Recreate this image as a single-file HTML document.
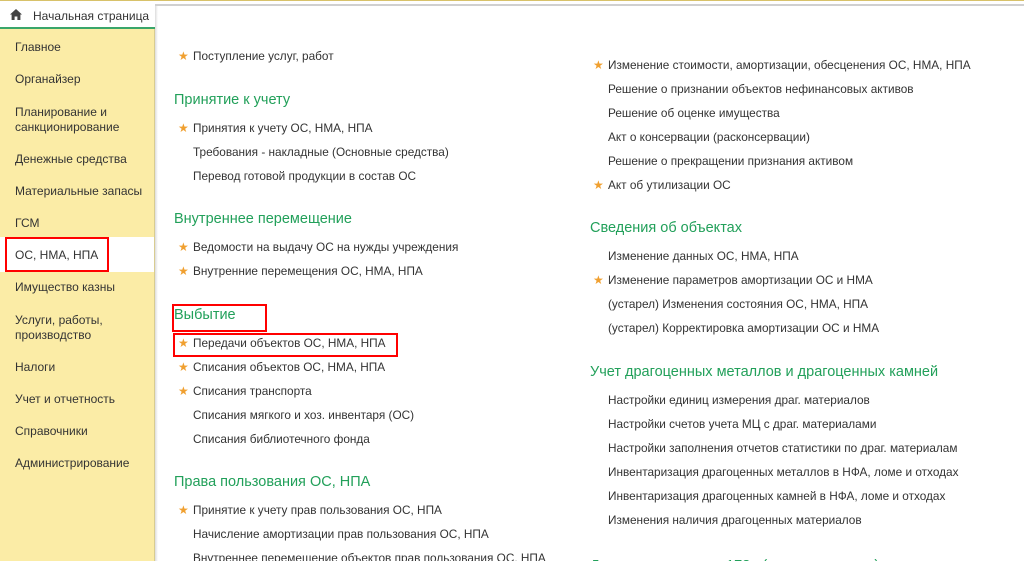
<!DOCTYPE html>
<html style="width:1024px;height:561px;overflow:hidden"><head><meta charset="utf-8"><style>
*{margin:0;padding:0;box-sizing:border-box}
body{width:1024px;height:561px;overflow:hidden;background:#fff;font-family:"Liberation Sans",Arial,sans-serif;position:relative;color:#333}
.top{position:absolute;left:0;top:0;width:1024px;height:1px;background:#d8c26a}
.gl{position:absolute;left:155px;top:4px;width:869px;height:2px;background:#d0d0d0}
.tab{position:absolute;left:0;top:1px;width:155px;height:28px;background:#fff;border-bottom:2px solid #3aa66a}
.tab span{position:absolute;left:33px;top:8px;font-size:12px;color:#333}
.side{position:absolute;left:0;top:29px;width:155px;height:532px;background:#fbeca6;border-right:1px solid #d8cc90}
.si{position:absolute;left:15px;font-size:12px;color:#333;line-height:15px}
.sel{position:absolute;left:0;top:237px;width:154px;height:35px;background:#fff}
.r{position:absolute;font-size:11.8px;line-height:14px;white-space:nowrap;color:#333}
.h{position:absolute;font-size:14.5px;line-height:16px;color:#22a05a;white-space:nowrap}
.st{color:#f0a030;position:absolute;margin-left:-15px;font-size:12px}
.box{position:absolute;border:2px solid #f00}
.main{position:absolute;left:155px;top:6px;width:3px;height:555px;background:linear-gradient(90deg,#ddd,#fff)}
</style></head><body>
<div class="top"></div>
<div class="gl"></div>
<div class="side"></div>
<div class="sel"></div>
<div class="tab"><svg style="position:absolute;left:10px;top:8px" width="12" height="11" viewBox="0 0 12 11"><path d="M6 0L0 5.5h1.6V11h3V7.5h2.8V11h3V5.5H12z" fill="#444"/></svg><span>Начальная страница</span></div>
<div class="main"></div>
<div class="si" style="top:40px">Главное</div>
<div class="si" style="top:72px">Органайзер</div>
<div class="si" style="top:105px">Планирование и<br>санкционирование</div>
<div class="si" style="top:152px">Денежные средства</div>
<div class="si" style="top:184px">Материальные запасы</div>
<div class="si" style="top:216px">ГСМ</div>
<div class="si" style="top:248px">ОС, НМА, НПА</div>
<div class="si" style="top:280px">Имущество казны</div>
<div class="si" style="top:313px">Услуги, работы,<br>производство</div>
<div class="si" style="top:360px">Налоги</div>
<div class="si" style="top:392px">Учет и отчетность</div>
<div class="si" style="top:424px">Справочники</div>
<div class="si" style="top:456px">Администрирование</div>
<div class="box" style="left:5px;top:237px;width:104px;height:35px"></div>

<div class="r" style="left:193px;top:49px"><span class="st">★</span>Поступление услуг, работ</div>
<div class="h" style="left:174px;top:92px">Принятие к учету</div>
<div class="r" style="left:193px;top:121px"><span class="st">★</span>Принятия к учету ОС, НМА, НПА</div>
<div class="r" style="left:193px;top:145px">Требования - накладные (Основные средства)</div>
<div class="r" style="left:193px;top:169px">Перевод готовой продукции в состав ОС</div>
<div class="h" style="left:174px;top:211px">Внутреннее перемещение</div>
<div class="r" style="left:193px;top:240px"><span class="st">★</span>Ведомости на выдачу ОС на нужды учреждения</div>
<div class="r" style="left:193px;top:264px"><span class="st">★</span>Внутренние перемещения ОС, НМА, НПА</div>
<div class="h" style="left:174px;top:307px">Выбытие</div>
<div class="box" style="left:172px;top:304px;width:95px;height:28px"></div>
<div class="r" style="left:193px;top:336px"><span class="st">★</span>Передачи объектов ОС, НМА, НПА</div>
<div class="box" style="left:173px;top:333px;width:225px;height:24px"></div>
<div class="r" style="left:193px;top:360px"><span class="st">★</span>Списания объектов ОС, НМА, НПА</div>
<div class="r" style="left:193px;top:384px"><span class="st">★</span>Списания транспорта</div>
<div class="r" style="left:193px;top:408px">Списания мягкого и хоз. инвентаря (ОС)</div>
<div class="r" style="left:193px;top:432px">Списания библиотечного фонда</div>
<div class="h" style="left:174px;top:474px">Права пользования ОС, НПА</div>
<div class="r" style="left:193px;top:503px"><span class="st">★</span>Принятие к учету прав пользования ОС, НПА</div>
<div class="r" style="left:193px;top:527px">Начисление амортизации прав пользования ОС, НПА</div>
<div class="r" style="left:193px;top:551px">Внутреннее перемещение объектов прав пользования ОС, НПА</div>

<div class="r" style="left:608px;top:58px"><span class="st">★</span>Изменение стоимости, амортизации, обесценения ОС, НМА, НПА</div>
<div class="r" style="left:608px;top:82px">Решение о признании объектов нефинансовых активов</div>
<div class="r" style="left:608px;top:106px">Решение об оценке имущества</div>
<div class="r" style="left:608px;top:130px">Акт о консервации (расконсервации)</div>
<div class="r" style="left:608px;top:154px">Решение о прекращении признания активом</div>
<div class="r" style="left:608px;top:178px"><span class="st">★</span>Акт об утилизации ОС</div>
<div class="h" style="left:590px;top:220px">Сведения об объектах</div>
<div class="r" style="left:608px;top:249px">Изменение данных ОС, НМА, НПА</div>
<div class="r" style="left:608px;top:273px"><span class="st">★</span>Изменение параметров амортизации ОС и НМА</div>
<div class="r" style="left:608px;top:297px">(устарел) Изменения состояния ОС, НМА, НПА</div>
<div class="r" style="left:608px;top:321px">(устарел) Корректировка амортизации ОС и НМА</div>
<div class="h" style="left:590px;top:364px">Учет драгоценных металлов и драгоценных камней</div>
<div class="r" style="left:608px;top:393px">Настройки единиц измерения драг. материалов</div>
<div class="r" style="left:608px;top:417px">Настройки счетов учета МЦ с драг. материалами</div>
<div class="r" style="left:608px;top:441px">Настройки заполнения отчетов статистики по драг. материалам</div>
<div class="r" style="left:608px;top:465px">Инвентаризация драгоценных металлов в НФА, ломе и отходах</div>
<div class="r" style="left:608px;top:489px">Инвентаризация драгоценных камней в НФА, ломе и отходах</div>
<div class="r" style="left:608px;top:513px">Изменения наличия драгоценных материалов</div>
<div class="h" style="left:590px;top:558px">Документы приказа 173н (не применяется)</div>
</body></html>
